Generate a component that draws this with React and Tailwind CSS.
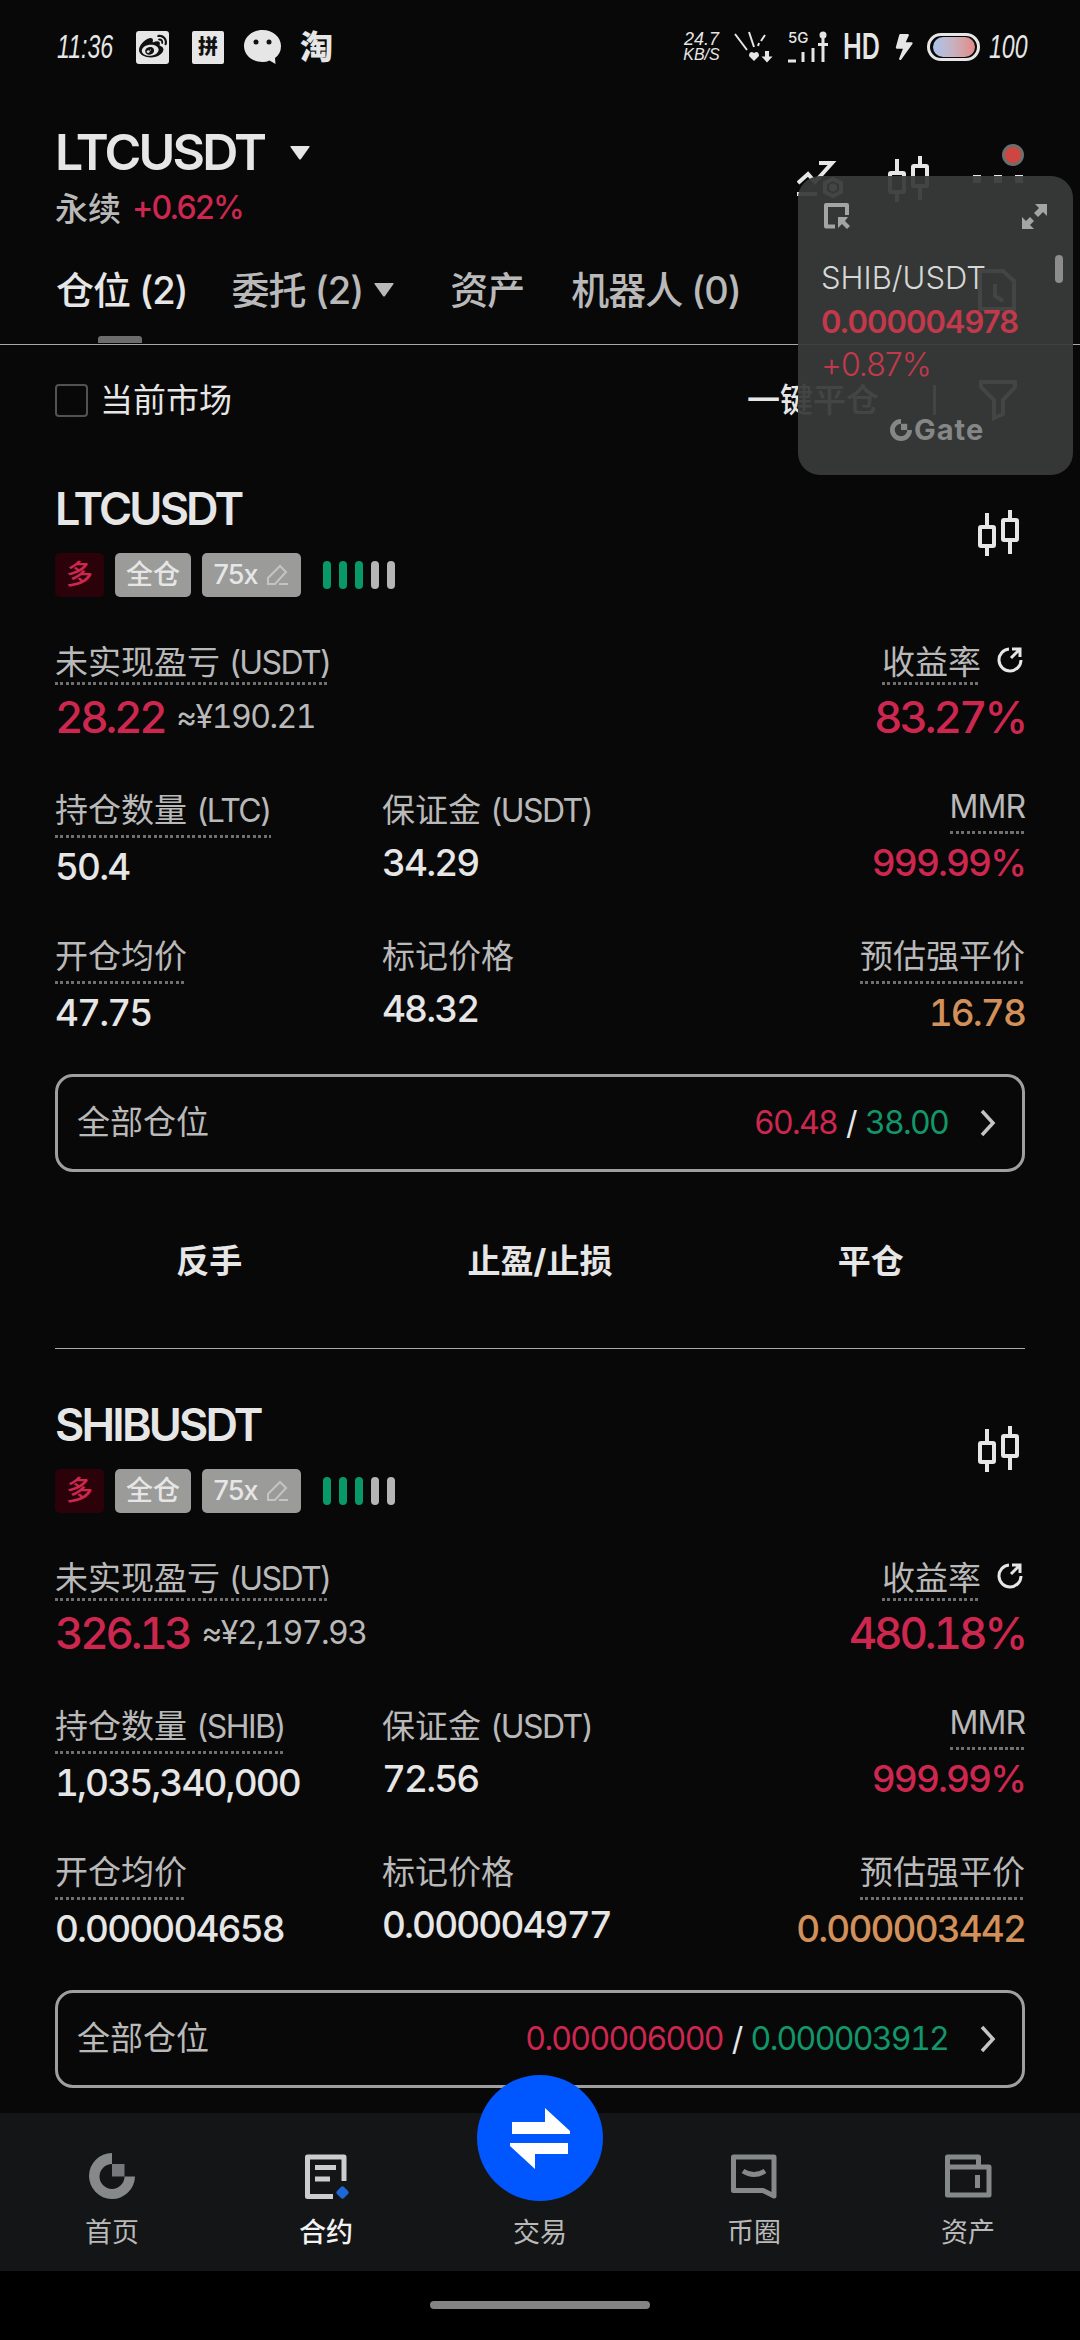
import { FaBolt, FaWeibo } from "react-icons/fa";

const positions = [
  {
    symbol: "LTCUSDT",
    unit: "LTC",
    pnl: "28.22",
    fiat: "≈¥190.21",
    roe: "83.27%",
    size: "50.4",
    margin: "34.29",
    mmr: "999.99%",
    entry: "47.75",
    mark: "48.32",
    liq: "16.78",
    takeProfit: "60.48",
    stopLoss: "38.00",
  },
  {
    symbol: "SHIBUSDT",
    unit: "SHIB",
    pnl: "326.13",
    fiat: "≈¥2,197.93",
    roe: "480.18%",
    size: "1,035,340,000",
    margin: "72.56",
    mmr: "999.99%",
    entry: "0.000004658",
    mark: "0.000004977",
    liq: "0.000003442",
    takeProfit: "0.000006000",
    stopLoss: "0.000003912",
  },
];

function CandleIcon({ className }) {
  return (
    <svg width="42" height="46" viewBox="0 0 42 46" fill="none" stroke="#e6e6e6" strokeWidth="4" className={className}>
      <rect x="2" y="17" width="14" height="19" rx="1" />
      <path d="M9 3v13M9 37v9M32 0v9M32 31v13" />
      <rect x="25" y="10" width="14" height="20" rx="1" />
    </svg>
  );
}

function Caret({ className }) {
  return (
    <svg width="20" height="14" viewBox="0 0 20 14" className={className}>
      <path d="M1 0h18q1 0 .5 1L11 13q-1 1-2 0L.5 1Q0 0 1 0z" fill="currentColor" />
    </svg>
  );
}

function StatusBar() {
  return (
    <div className="flex h-[94px] items-center pl-[57px] text-[#e6e6e6]">
      <span className="w-[79px]">
        <span className="inline-block origin-left scale-x-[0.7] font-['Liberation_Sans_Narrow','Liberation_Sans'] text-[33px] italic">11:36</span>
      </span>
      <span className="flex h-[33px] w-[33px] items-center justify-center rounded-[3px] bg-[#e6e6e6] text-[#111]">
        <FaWeibo size={28} />
      </span>
      <span className="ml-[23px] flex h-[33px] w-[32px] items-center justify-center rounded-[2px] bg-[#e6e6e6] text-[20px] leading-none font-black text-[#111]">
        拼
      </span>
      <svg width="37" height="34" viewBox="0 0 37 34" className="ml-[20px]">
        <path d="M18.5 0C8 0 0 7 0 16s8 16 18.500 16q4 0 7-1.500l6 3.500-.5-6q6-4.500 6-12C37 7 29 0 18.500 0z" fill="#e6e6e6" />
        <circle cx="12" cy="12" r="2.500" fill="#111" />
        <circle cx="25" cy="12" r="2.500" fill="#111" />
      </svg>
      <span className="ml-[19px] text-[33px] leading-none font-black">淘</span>

      <div className="mr-[55px] ml-auto flex items-center">
        <span className="flex w-[33px] flex-col items-center font-['Liberation_Sans_Narrow','Liberation_Sans'] leading-[16px] italic">
          <span className="text-[18px]">24.7</span>
          <span className="text-[16px]">KB/S</span>
        </span>
        <svg width="40" height="32" viewBox="0 0 40 32" fill="none" stroke="#e6e6e6" strokeWidth="2" className="ml-[16px]">
          <path d="M1 3l12 16M15 1l5 15M31 4l-4 6M25 12l-1 3" />
          <path d="M33 20v8" strokeWidth="4" />
          <path d="M27.500 25.500h11L33 31.500zM20 30l-5-5q0-4 3-4l2 1 2-1q3 0 3 4z" fill="#e6e6e6" stroke="none" />
        </svg>
        <div className="relative ml-[14px] h-[32px] w-[42px]">
          <span className="absolute top-0 left-0 text-[15px] leading-[14px] font-medium">5G</span>
          <svg width="42" height="32" viewBox="0 0 42 32" fill="none" stroke="#e6e6e6" strokeWidth="3">
            <path d="M0 30h8M15 21v10M25 17v14M35 5v26M30 13.500h10" />
            <circle cx="35" cy="4" r="3.500" fill="#e6e6e6" stroke="none" />
          </svg>
        </div>
        <span className="ml-[13px] w-[36px]">
          <span className="inline-block origin-left scale-x-[0.72] font-['Inter'] text-[35px] leading-none font-semibold">HD</span>
        </span>
        <FaBolt size={26} className="ml-[13px] w-[24px] skew-x-[-8deg]" />
        <span className="ml-[11px] flex h-[28px] w-[53px] items-center justify-center rounded-full border-[3px] border-[#e6e6e6]">
          <span className="h-[20px] w-[42px] rounded-full bg-linear-to-r from-[#a9c3ee] via-[#c9b0bd] to-[#e08a86]" />
        </span>
        <span className="ml-[9px] w-[36px]">
          <span className="inline-block origin-left scale-x-[0.7] font-['Liberation_Sans_Narrow','Liberation_Sans'] text-[33px] italic">100</span>
        </span>
      </div>
    </div>
  );
}

function Header() {
  return (
    <header className="flex h-[131px] justify-between pt-[31px] pl-[55px]">
      <div>
        <div className="flex h-[55px] items-center">
          <h1 className="text-[50px] leading-[55px] font-semibold tracking-[-2.8px]">LTCUSDT</h1>
          <Caret className="ml-[26px]" />
        </div>
        <div className="mt-[12px] flex h-[34px] items-center leading-[34px]">
          <span className="text-[33px] font-medium text-[#b9b9b9]">永续</span>
          <span className="mb-[3px] ml-[11px] text-[32px] font-medium tracking-[-1.8px] text-[#cd2750]">+0.62%</span>
        </div>
      </div>
      <div className="relative mr-[57px] flex h-[108px] items-center">
        <svg width="48" height="38" viewBox="0 0 48 38" fill="none" stroke="#e6e6e6" strokeWidth="4" className="mr-[43px]">
          <path d="M1 23l10-9 7 8L35 3H22M0 34h20" />
          <path d="M36 19l8 4v9l-8 4-8-4v-9z" />
          <circle cx="36" cy="27.500" r="2" />
        </svg>
        <CandleIcon className="mr-[43px]" />
        <div className="flex gap-[13px]">
          <span className="size-[8px] bg-[#e6e6e6]" />
          <span className="size-[8px] bg-[#e6e6e6]" />
          <span className="size-[8px] bg-[#e6e6e6]" />
        </div>
        <span className="absolute top-[19px] -right-px size-[22px] rounded-full border-[3px] border-[#6d6d6d] bg-[#cf4540]" />
      </div>
    </header>
  );
}

function Tabs() {
  return (
    <nav className="flex h-[120px] items-center border-b border-[#a8a8a8] pt-[11px] pl-[56px] text-[38px] leading-[44px] font-medium tracking-[-1px] text-[#b9b9b9]">
      <div className="relative text-[#e6e6e6]">
        仓位 (2)
        <span className="absolute top-[68px] left-[42px] h-[7px] w-[44px] rounded-t-[3px] bg-[#6c6c6c]" />
      </div>
      <div className="ml-[44px] flex items-center">
        委托 (2)
        <Caret className="ml-[11px]" />
      </div>
      <div className="ml-[56px]">资产</div>
      <div className="ml-[47px]">机器人 (0)</div>
      <svg width="38" height="42" viewBox="0 0 38 42" fill="none" stroke="#e6e6e6" strokeWidth="4" className="mr-[64px] ml-auto">
        <path d="M2 2h23l11 10v28H2zM17 15v12l8 5" />
      </svg>
    </nav>
  );
}

function MarketFilter() {
  return (
    <div className="flex h-[88px] items-center pt-[22px] pr-[63px] pl-[55px] text-[33px] leading-[40px]">
      <span className="size-[33px] rounded-[4px] border-[2px] border-[#505356]" />
      <span className="ml-[12px]">当前市场</span>
      <span className="ml-auto font-medium">一键平仓</span>
      <span className="ml-[54px] h-[30px] w-[3px] bg-[#e6e6e6]" />
      <svg width="38" height="42" viewBox="0 0 38 42" fill="none" stroke="#e6e6e6" strokeWidth="4" className="ml-[43px]">
        <path d="M2 3h34v5L24 21v14l-9 4V21L2 8z" />
      </svg>
    </div>
  );
}

function Label({ children, dotted = true, gap = "pb-[8px]" }) {
  return (
    <div className="w-fit text-[#b9b9b9]">
      <div className={`h-[34px] box-content text-[33px] leading-[34px] font-normal tracking-normal ${gap}`}>{children}</div>
      <div
        className={
          dotted ? "h-[3px] bg-[repeating-linear-gradient(90deg,#6f6f6f_0_3px,transparent_3px_5.5px)]" : "h-[3px]"
        }
      />
    </div>
  );
}

function Unit({ children }) {
  return <span className="text-[32px] leading-none tracking-[-1.6px]">({children})</span>;
}

function PositionCard({ data }) {
  return (
    <section className="h-[916px] px-[55px] pt-[48px]">
      <div className="flex h-full flex-col border-b border-[#a8a8a8]">
        <div className="flex justify-between">
          <div>
            <h2 className="text-[45px] leading-[55px] font-semibold tracking-[-2.8px]">{data.symbol}</h2>
            <div className="mt-[17px] flex h-[44px] items-center text-[27px] leading-[44px] font-medium">
              <span className="w-[49px] rounded-[5px] bg-[#2b0209] text-center text-[#cd2750]">多</span>
              <span className="ml-[11px] w-[76px] rounded-[5px] bg-[#9b9b99] text-center">全仓</span>
              <span className="ml-[11px] flex w-[99px] items-center justify-center rounded-[5px] bg-[#9b9b99] tracking-[-1px]">
                75x
                <svg width="22" height="22" viewBox="0 0 22 22" fill="none" stroke="#c4c4c3" strokeWidth="2" className="ml-[10px]">
                  <path d="M1 20v-6L13 2l6 6L8 20zM12 20h9" />
                </svg>
              </span>
              <div className="ml-[22px] flex gap-[8px]">
                <span className="h-[28px] w-[8px] rounded-full bg-[#079a68]" />
                <span className="h-[28px] w-[8px] rounded-full bg-[#079a68]" />
                <span className="h-[28px] w-[8px] rounded-full bg-[#079a68]" />
                <span className="h-[28px] w-[8px] rounded-full bg-[#b5b5b5]" />
                <span className="h-[28px] w-[8px] rounded-full bg-[#b5b5b5]" />
              </div>
            </div>
          </div>
          <CandleIcon className="mt-[29px] mr-[5px]" />
        </div>

        <div className="mt-[48px] flex justify-between">
          <Label gap="pb-[3px]">
            未实现盈亏 <Unit>USDT</Unit>
          </Label>
          <div className="flex">
            <Label gap="pb-[3px]">收益率</Label>
            <svg width="26" height="28" viewBox="0 0 26 28" fill="none" stroke="#e6e6e6" strokeWidth="3" className="mt-[1px] mr-[2px] ml-[16px]">
              <path d="M12 3A11 11 0 1 0 24 14M14 12l9-9M15 3h8v8" />
            </svg>
          </div>
        </div>
        <div className="mt-[10px] flex h-[44px] items-center text-[44px] leading-[44px] font-medium tracking-[-3.3px] text-[#cd2750] tabular-nums">
          <span>{data.pnl}</span>
          <span className="ml-[12px] text-[32px] font-normal tracking-[-1.5px] text-[#b9b9b9]">{data.fiat}</span>
          <span className="ml-auto tracking-[-3.1px]">{data.roe}</span>
        </div>

        <div className="mt-[54px] grid h-[94px] grid-cols-[327px_1fr_auto] text-[37px] leading-[40px] font-medium tracking-[-1.9px] tabular-nums">
          <div>
            <Label>
              持仓数量 <Unit>{data.unit}</Unit>
            </Label>
            <div className="mt-[9px]">{data.size}</div>
          </div>
          <div>
            <Label dotted={false}>
              保证金 <Unit>USDT</Unit>
            </Label>
            <div className="mt-[5px]">{data.margin}</div>
          </div>
          <div className="-mt-[4px] flex flex-col items-end">
            <Label>
              <span className="text-[32px] leading-none tracking-[-1px]">MMR</span>
            </Label>
            <div className="mt-[9px] text-[#cd2750]">{data.mmr}</div>
          </div>
        </div>
        <div className="mt-[52px] grid h-[94px] grid-cols-[327px_1fr_auto] text-[37px] leading-[40px] font-medium tracking-[-1.9px] tabular-nums">
          <div>
            <Label>开仓均价</Label>
            <div className="mt-[9px]">{data.entry}</div>
          </div>
          <div>
            <Label dotted={false}>标记价格</Label>
            <div className="mt-[5px]">{data.mark}</div>
          </div>
          <div className="flex flex-col items-end">
            <Label>预估强平价</Label>
            <div className="mt-[9px] text-[#d2915a]">{data.liq}</div>
          </div>
        </div>

        <div className="mt-[41px] flex h-[98px] shrink-0 items-center rounded-[18px] border-[3px] border-[#9f9f9f] pr-[26px] pl-[19px] text-[32px] tracking-[-1.7px] tabular-nums">
          <span className="text-[33px] tracking-normal text-[#b9b9b9]">全部仓位</span>
          <span className="ml-auto text-[#cd2750]">{data.takeProfit}</span>
          <span className="mr-[9px] ml-[9px]">/</span>
          <span className="text-[#12976a]">{data.stopLoss}</span>
          <svg width="16" height="28" viewBox="0 0 16 28" fill="none" stroke="#c4c4c4" strokeWidth="3.500" className="ml-[32px]">
            <path d="M2 2l11 12L2 26" />
          </svg>
        </div>

        <div className="mt-[44px] grid h-[90px] grid-cols-3 gap-[22px] text-center text-[33px] leading-[90px] font-bold">
          <button>反手</button>
          <button>止盈/止损</button>
          <button>平仓</button>
        </div>
      </div>
    </section>
  );
}

function FloatingTicker() {
  return (
    <aside className="absolute top-[176px] left-[798px] h-[299px] w-[275px] rounded-[22px] bg-[#383a39]/94 pt-[27px] pl-[23px]">
      <div className="flex justify-between pr-[25px] pl-[3px]">
        <svg width="26" height="26" viewBox="0 0 26 26" fill="none" stroke="#a3a5a4" strokeWidth="4">
          <path d="M11 23.500H2V2h21v10" strokeLinejoin="round" />
          <path d="M14 14h10l-3 4 5 5-3 3-5-5-4 4z" fill="#a3a5a4" stroke="none" />
        </svg>
        <svg width="26" height="26" viewBox="0 0 26 26" fill="#a3a5a4">
          <path d="M13 1h12v12l-4-4-5 5-4-4 5-5zM0 14l4 4 4-4 4 4-4 4 4 4H0z" />
        </svg>
      </div>
      <div className="mt-[31px] text-[31px] leading-[36px] font-light text-[#d6d7d6]">SHIB/USDT</div>
      <div className="mt-[8px] text-[31px] leading-[36px] font-semibold tracking-[-1px] text-[#c2394c]">0.000004978</div>
      <div className="mt-[7px] text-[32px] leading-[36px] font-light tracking-[-1px] text-[#c2394c]">+0.87%</div>
      <div className="mt-[33px] ml-[69px] flex items-center text-[#848786]">
        <svg width="22" height="22" viewBox="0 0 46 46" fill="currentColor">
          <path d="M23 0v10a13 13 0 1 0 13 13h10A23 23 0 1 1 23 0z" />
          <path d="M23 10h13v13H23z" />
        </svg>
        <span className="ml-[2px] text-[29px] leading-[28px] font-bold tracking-[1px]">Gate</span>
      </div>
      <span className="absolute top-[79px] right-[10px] h-[28px] w-[8px] rounded-full bg-[#8b8c8b]" />
    </aside>
  );
}

function BottomNav() {
  return (
    <footer className="absolute inset-x-0 bottom-0 bg-black">
      <div className="grid h-[158px] grid-cols-5 bg-[#131516] px-[5px] pt-[39px] text-center text-[27px] leading-[40px] text-[#b9b9b9]">
        <div className="flex flex-col items-center">
          <svg width="46" height="48" viewBox="0 0 46 48" fill="#85898a">
            <path d="M23 1v11a12.500 12.500 0 1 0 12.500 12.500H46A23 23 0 1 1 23 1z" />
            <path d="M23 12h12.500v12.500H23z" fill="#75797b" />
          </svg>
          <span className="mt-[13px]">首页</span>
        </div>
        <div className="flex flex-col items-center">
          <svg width="46" height="48" viewBox="0 0 46 48" fill="none" stroke="#cdcdcd" strokeWidth="5">
            <path d="M30 44.500H4.500V5H41v24" strokeLinejoin="round" />
            <path d="M12 15.500h21M12 27h15" />
            <rect x="34.500" y="35.500" width="10" height="10" rx="2.500" transform="rotate(45 39.5 40.5)" fill="#1d68d4" stroke="none" />
          </svg>
          <span className="mt-[13px] font-medium text-[#f2f2f2]">合约</span>
        </div>
        <div className="relative flex flex-col items-center">
          <span className="absolute -top-[77px] flex size-[126px] items-center justify-center rounded-full bg-[#0056ff]">
            <svg width="62" height="62" viewBox="0 0 62 62" fill="#fff">
              <path d="M3 15h33V1l25 23v3H3zM1 36h58v11H26v15L1 39z" />
            </svg>
          </span>
          <span className="mt-[61px]">交易</span>
        </div>
        <div className="flex flex-col items-center">
          <svg width="48" height="48" viewBox="0 0 48 48" fill="none" stroke="#85898a" strokeWidth="5">
            <path d="M3.500 5H44v39l-11-5.500H3.500z" strokeLinejoin="round" />
            <path d="M13 19q11 7 22 0" />
          </svg>
          <span className="mt-[13px]">币圈</span>
        </div>
        <div className="flex flex-col items-center">
          <svg width="48" height="48" viewBox="0 0 48 48" fill="none" stroke="#85898a" strokeWidth="5">
            <path d="M3.500 15V5h31v10M3.500 15H45v28H3.500z" strokeLinejoin="round" />
            <path d="M33.500 23v13" />
          </svg>
          <span className="mt-[13px]">资产</span>
        </div>
      </div>
      <div className="flex h-[69px] justify-center pt-[30px]">
        <span className="h-[8px] w-[220px] rounded-full bg-[#838383]" />
      </div>
    </footer>
  );
}

export default function App() {
  return (
    <div className="relative h-[2340px] w-[1080px] overflow-hidden bg-[#080808] font-['Inter','Noto_Sans_CJK_SC',sans-serif] text-[#e6e6e6]">
      <StatusBar />
      <Header />
      <Tabs />
      <MarketFilter />
      {positions.map((item) => (
        <PositionCard key={item.symbol} data={item} />
      ))}
      <FloatingTicker />
      <BottomNav />
    </div>
  );
}
